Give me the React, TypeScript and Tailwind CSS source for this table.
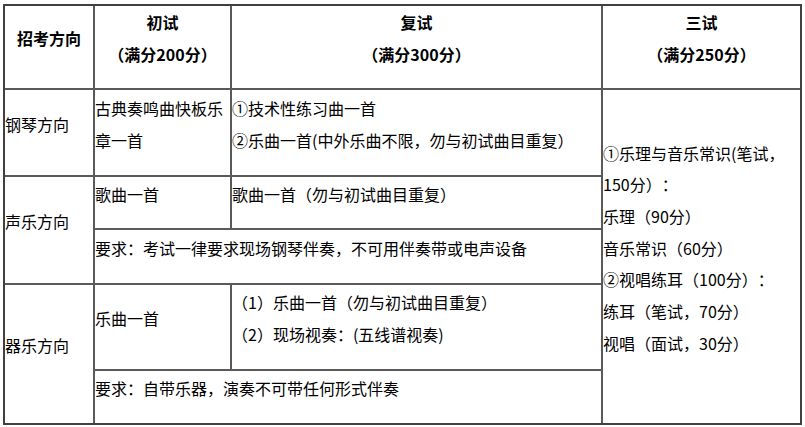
import React from 'react';

type CellProps = {
  className?: string;
  head?: boolean;
  children: React.ReactNode;
};

// every cell is vertically centred, with an empty strip under the text
const Cell: React.FC<CellProps> = ({ className = '', head = false, children }) => (
  <div
    className={`flex flex-col justify-center bg-white pb-4 text-[16px] leading-[31.67px] text-black ${
      head ? 'items-center text-center font-bold' : ''
    } ${className}`}
  >
    {children}
  </div>
);

const App: React.FC = () => {
  return (
    <div
      className="min-h-screen bg-white [text-spacing-trim:space-all]"
      style={{ fontFamily: '"Microsoft YaHei", "Noto Sans CJK SC", "Noto Sans", sans-serif' }}
    >
      <div className="ml-[3px] pt-[4px]">
        <div className="grid w-[799px] grid-cols-[88px_135px_369px_197px] grid-rows-[82px_85px_51px_53px_84px_52px] gap-[2px] border-2 border-[#404040] bg-[#5a5a5a]">
          {/* header */}
          <Cell head className="col-start-1 row-start-1">
            <div>招考方向</div>
          </Cell>
          <Cell head className="col-start-2 row-start-1">
            <div>初试</div>
            <div>（满分200分）</div>
          </Cell>
          <Cell head className="col-start-3 row-start-1">
            <div>复试</div>
            <div>（满分300分）</div>
          </Cell>
          <Cell head className="col-start-4 row-start-1">
            <div>三试</div>
            <div>（满分250分）</div>
          </Cell>

          {/* 钢琴方向 */}
          <Cell className="col-start-1 row-start-2">
            <div>钢琴方向</div>
          </Cell>
          <Cell className="col-start-2 row-start-2">
            <div>古典奏鸣曲快板乐章一首</div>
          </Cell>
          <Cell className="col-start-3 row-start-2">
            <div>①技术性练习曲一首</div>
            <div>②乐曲一首(中外乐曲不限，勿与初试曲目重复）</div>
          </Cell>

          {/* 三试 spans all body rows */}
          <Cell className="col-start-4 row-start-2 row-span-5">
            <div>①乐理与音乐常识(笔试，150分）：</div>
            <div>乐理（90分）</div>
            <div>音乐常识（60分）</div>
            <div>②视唱练耳（100分）：</div>
            <div>练耳（笔试，70分）</div>
            <div>视唱（面试，30分）</div>
          </Cell>

          {/* 声乐方向 */}
          <Cell className="col-start-1 row-start-3 row-span-2">
            <div>声乐方向</div>
          </Cell>
          <Cell className="col-start-2 row-start-3">
            <div>歌曲一首</div>
          </Cell>
          <Cell className="col-start-3 row-start-3">
            <div>歌曲一首（勿与初试曲目重复）</div>
          </Cell>
          <Cell className="col-start-2 col-span-2 row-start-4">
            <div>要求：考试一律要求现场钢琴伴奏，不可用伴奏带或电声设备</div>
          </Cell>

          {/* 器乐方向 */}
          <Cell className="col-start-1 row-start-5 row-span-2">
            <div>器乐方向</div>
          </Cell>
          <Cell className="col-start-2 row-start-5">
            <div>乐曲一首</div>
          </Cell>
          <Cell className="col-start-3 row-start-5">
            <div>（1）乐曲一首（勿与初试曲目重复）</div>
            <div>（2）现场视奏：(五线谱视奏)</div>
          </Cell>
          <Cell className="col-start-2 col-span-2 row-start-6">
            <div>要求：自带乐器，演奏不可带任何形式伴奏</div>
          </Cell>
        </div>
      </div>
    </div>
  );
};

export default App;
